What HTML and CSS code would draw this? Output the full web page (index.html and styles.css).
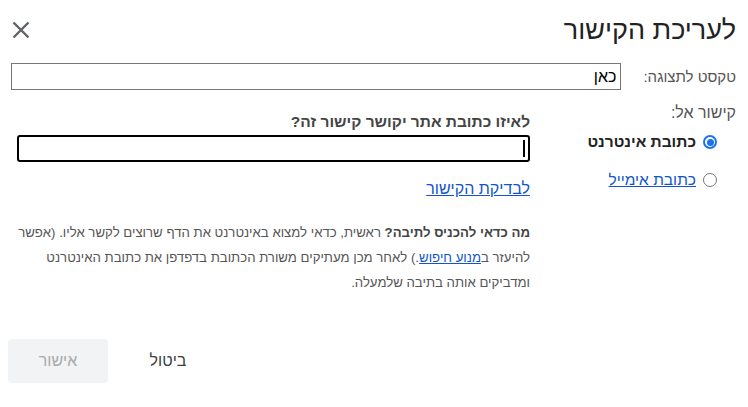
FILE: index.html
```html
<!DOCTYPE html>
<html lang="he" dir="rtl">
<head>
<meta charset="utf-8">
<link rel="stylesheet" href="styles.css">
</head>
<body>
<div class="dialog">
  <div class="header">
    <h1 class="title">לעריכת הקישור</h1>
    <button class="close" aria-label="סגירה">
      <svg width="18" height="18" viewBox="0 0 18 18"><path d="M1.5 1.5 L16.5 16.5 M16.5 1.5 L1.5 16.5" stroke="#5f6368" stroke-width="2.4" fill="none"/></svg>
    </button>
  </div>
  <div class="row-text">
    <label class="lbl">טקסט לתצוגה:</label>
    <div class="input1">כאן</div>
  </div>
  <div class="body">
    <div class="side">
      <div class="side-lbl">קישור אל:</div>
      <div class="radio-row"><span class="radio on"></span><span class="r-bold">כתובת אינטרנט</span></div>
      <div class="radio-row"><span class="radio"></span><a class="r-link" href="#">כתובת אימייל</a></div>
    </div>
    <div class="main">
      <div class="q">לאיזו כתובת אתר יקושר קישור זה?</div>
      <div class="input2"><span class="caret"></span></div>
      <a class="test" href="#">לבדיקת הקישור</a>
      <p class="help"><b>מה כדאי להכניס לתיבה?</b> ראשית, כדאי למצוא באינטרנט את הדף שרוצים לקשר אליו. (אפשר להיעזר ב<a href="#">מנוע חיפוש</a>.) לאחר מכן מעתיקים משורת הכתובת בדפדפן את כתובת האינטרנט ומדביקים אותה בתיבה שלמעלה.</p>
    </div>
  </div>
  <div class="footer">
    <button class="ok">אישור</button>
    <button class="cancel">ביטול</button>
  </div>
</div>
</body>
</html>
```
FILE: styles.css
```css
html, body { margin: 0; padding: 0; background: #fff; }
body {
  font-family: "Liberation Sans", Arial, sans-serif;
  color: #444;
  width: 748px;
  height: 407px;
  overflow: hidden;
}
.dialog { padding: 12px 12px 0 8px; }
.header { display: flex; justify-content: space-between; align-items: center; height: 36px; }
.title { margin: 0; font-size: 27px; font-weight: normal; color: #222; }
.close { border: 0; background: none; padding: 0; margin-left: 4px; width: 18px; height: 18px; display: flex; }
.row-text { display: flex; align-items: center; margin-top: 15px; gap: 22px; }
.lbl { font-size: 15px; color: #555; white-space: nowrap; }
.input1 {
  flex: 1; height: 25px; border: 1px solid #767676; font-size: 16px; color: #000;
  line-height: 25px; padding: 0 4px; margin-left: 3px;
}
.body { display: flex; margin-top: 14px; }
.side { width: 206px; }
.side-lbl { font-size: 16px; color: #555; height: 20px; line-height: 20px; margin-top: -1px; }
.radio-row { display: flex; align-items: center; gap: 7px; height: 38px; font-size: 15.5px; margin-right: 19px; }
.radio { border: 1px solid #767676; border-radius: 50%; box-sizing: border-box; width: 14px; height: 14px; flex: none; position: relative; }
.radio.on { border: 2px solid #1a73e8; }
.radio.on::after { content: ""; position: absolute; left: 1.5px; top: 1.5px; width: 7px; height: 7px; border-radius: 50%; background: #1a73e8; }
.r-bold { font-weight: bold; color: #222; }
.r-link { color: #1155cc; }
.main { flex: 1; padding-left: 9px; }
.q { font-weight: bold; font-size: 15.5px; color: #444; margin-top: 10px; height: 16px; line-height: 16px; }
.input2 {
  height: 23px; border: 2px solid #000; border-radius: 3px; margin-top: 5px; position: relative;
}
.caret { position: absolute; right: 3px; top: 3px; width: 2px; height: 17px; background: #000; }
.test { display: inline-block; margin-top: 18px; font-size: 16px; color: #1155cc; }
.help { margin: 22px 0 0; font-size: 13.2px; line-height: 25px; color: #555; }
.help b { color: #444; }
.help a { color: #1155cc; }
.footer { display: flex; flex-direction: row-reverse; justify-content: flex-start; gap: 20px; margin-top: 44px; }
.ok { width: 100px; height: 44px; border: 0; border-radius: 4px; background: #f1f3f4; color: #aaa; font-family: inherit; font-size: 16px; }
.cancel { width: 80px; height: 44px; border: 0; background: none; color: #3c4043; font-family: inherit; font-size: 16px; }
```
